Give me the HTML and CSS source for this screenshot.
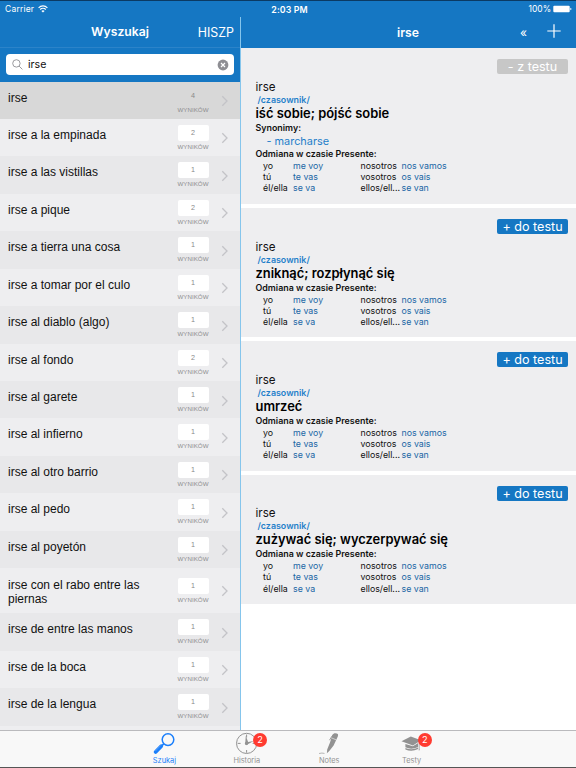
FILE: index.html
```html
<!DOCTYPE html>
<html lang="pl">
<head>
  <meta charset="UTF-8">
  <meta name="viewport" content="width=device-width, initial-scale=1.0">
  <title>Wyszukaj</title>
  <link rel="stylesheet" href="styles.css">
</head>
<body>
  <div class="status">
    <span class="carrier">Carrier
      <svg width="10" height="8" viewBox="0 0 10 8" fill="none" stroke="#fff" stroke-width="1.2">
        <path d="M.6 2.8a6.2 6.2 0 0 1 8.8 0M2.2 4.5a4 4 0 0 1 5.6 0"/>
        <path d="M5 7.6 3.4 5.9a2.3 2.3 0 0 1 3.2 0z" fill="#fff" stroke="none"/>
      </svg>
    </span>
    <span class="time">2:03 PM</span>
    <span class="battery">100%
      <svg width="19" height="8" viewBox="0 0 19 8" fill="#fff">
        <rect x=".3" y=".7" width="16.4" height="6.6" rx="1"/>
        <path d="M17.3 2.7q1.2.3 1.2 1.3t-1.2 1.3z"/>
      </svg>
    </span>
  </div>

  <main>
    <section class="sidebar">
      <header>
        <h1>Wyszukaj</h1>
        <span class="lang">HISZP</span>
      </header>
      <div class="search">
        <div class="search-field">
          <svg width="11" height="11" viewBox="0 0 11 11" fill="none" stroke="#8e8e93" stroke-width=".9">
            <circle cx="4.4" cy="4.4" r="3.7"/>
            <path d="m7.1 7.1 3.3 3.3"/>
          </svg>
          <span>irse</span>
          <svg class="clear" width="12" height="12" viewBox="0 0 12 12">
            <circle cx="6" cy="6" r="5.4" fill="#8e8e93"/>
            <path d="m4 4 4 4m0-4L4 8" stroke="#fff" stroke-width="1.2"/>
          </svg>
        </div>
      </div>
      <ul class="results" id="results"></ul>
    </section>

    <section class="detail">
      <header>
        <h1>irse</h1>
        <span class="back">«</span>
        <svg class="plus" width="14" height="14" viewBox="0 0 14 14" stroke="#fff" stroke-width="1.2">
          <path d="M7 .3v13.4M.3 7h13.4"/>
        </svg>
      </header>
      <div id="cards"></div>
    </section>
  </main>

  <nav class="tabs">
    <div class="tab active">
      <svg width="24" height="24" viewBox="0 0 24 24">
        <circle cx="16" cy="7.6" r="5.8" fill="none" stroke="#1a7ffb" stroke-width="1.5"/>
        <path d="m11.7 11.9-2 1.9" stroke="#1a7ffb" stroke-width="1.6"/>
        <path d="m9.2 14.2-5.600 5.800" stroke="#1a7ffb" stroke-width="3.800" stroke-linecap="round"/>
        <path d="m8.800 13.400-5.400 5.600" stroke="#7db5fa" stroke-width=".6"/>
      </svg>
      <span>Szukaj</span>
    </div>
    <div class="tab">
      <svg width="24" height="24" viewBox="0 0 24 24">
        <circle cx="11.6" cy="11.4" r="10.1" fill="none" stroke="#929292" stroke-width="1"/>
        <path d="M11.600 2.500v3M11.600 18v2.800M2.600 11.400h3M17.600 11.400h3" stroke="#929292"/>
        <path d="m10.800 3.800 2.300 6.200 5.700-1-5.600 3.100-2 1.100-1-1.500z" fill="#929292"/>
        <circle cx="11.500" cy="11.400" r="1.600" fill="#929292"/>
      </svg>
      <b>2</b>
      <span>Historia</span>
    </div>
    <div class="tab">
      <svg width="24" height="24" viewBox="0 0 24 24">
        <path d="M15.400 2.700Q18 .4 20.800 1.900q.6.900 0 2.500l-4.200 9-4.100 5.300-2.600 2.500.3-3.600 2.800-7z" fill="#929292"/>
        <path d="M17.400 1.800q-2.400 1.400-4.900 6.400" stroke="#929292" stroke-width=".9" fill="none"/>
        <path d="m14.800 6 4.200 1.800" stroke="#f8f8f8" stroke-width=".6"/>
        <path d="M2 21.500q3-.8 5.500-.1" stroke="#999" stroke-width=".7" fill="none"/>
      </svg>
      <span>Notes</span>
    </div>
    <div class="tab">
      <svg width="24" height="24" viewBox="0 0 24 24" fill="#929292">
        <path d="M1.500 9.300 10.800 4.400 20.300 8v.8l-7.400 4.700z"/>
        <path d="M5.400 12v3.200q6 3 12.800-.3v-3.800l-5.300 3.200z"/>
        <path d="M5.400 15.900v1.500q6 3 12.800-.3v-1.500q-6.400 3.200-12.800.3z"/>
        <path d="M18.900 9.800v7.200l-.4 1.300h1.300l-.3-1.300V9.500z"/>
      </svg>
      <b>2</b>
      <span>Testy</span>
    </div>
  </nav>

  <script>
    const wyniki = [
      ['irse', 4], ['irse a la empinada', 2], ['irse a las vistillas', 1],
      ['irse a pique', 2], ['irse a tierra una cosa', 1], ['irse a tomar por el culo', 1],
      ['irse al diablo (algo)', 1], ['irse al fondo', 2], ['irse al garete', 1],
      ['irse al infierno', 1], ['irse al otro barrio', 1], ['irse al pedo', 1],
      ['irse al poyetón', 1], ['irse con el rabo entre las piernas', 1],
      ['irse de entre las manos', 1], ['irse de la boca', 1], ['irse de la lengua', 1]
    ];

    const karty = [
      { znaczenie: 'iść sobie; pójść sobie', synonim: 'marcharse', dodane: true },
      { znaczenie: 'zniknąć; rozpłynąć się' },
      { znaczenie: 'umrzeć' },
      { znaczenie: 'zużywać się; wyczerpywać się' }
    ];

    const odmiana = [
      ['yo', 'me voy', 'nosotros', 'nos vamos'],
      ['tú', 'te vas', 'vosotros', 'os vais'],
      ['él/ella', 'se va', 'ellos/ell...', 'se van']
    ];

    document.getElementById('results').innerHTML = wyniki.map(([haslo, ile]) => `
      <li class="${haslo.length > 30 ? 'tall' : ''}">
        <span class="term">${haslo}</span>
        <span class="count"><b>${ile}</b><small>WYNIKÓW</small></span>
        <svg width="8" height="12" viewBox="0 0 8 12" fill="none" stroke="#c3c3c7" stroke-width="1.3">
          <path d="m1.3 1.3 4.700 4.700-4.700 4.700"/>
        </svg>
      </li>`).join('');

    document.getElementById('cards').innerHTML = karty.map(k => `
      <article class="card">
        <button class="${k.dodane ? 'remove' : ''}">${k.dodane ? '- z testu' : '+ do testu'}</button>
        <p class="word">irse</p>
        <p class="kind">/czasownik/</p>
        <h2>${k.znaczenie}</h2>
        ${k.synonim ? `<h3>Synonimy:</h3><p class="synonym">- ${k.synonim}</p>` : ''}
        <h3>Odmiana w czasie Presente:</h3>
        <div class="forms">${odmiana.flat().map(f => `<span>${f}</span>`).join('')}</div>
      </article>`).join('');
  </script>
</body>
</html>
```
FILE: styles.css
```css
* {
  box-sizing: border-box;
}

body {
  font-family: 'Inter', sans-serif;
  margin: 0;
  height: 768px;
  display: flex;
  flex-direction: column;
  overflow: hidden;
  background-color: #fff;
  color: #111;
}

h1, h2, h3, p, ul {
  margin: 0;
  padding: 0;
}

svg {
  display: block;
  flex: none;
}

.status {
  display: grid;
  grid-template-columns: 1fr auto 1fr;
  height: 17px;
  flex: none;
  padding: 0 4px 0 5px;
  align-items: center;
  border-top: 1px solid #0b3a63;
  background-color: #1577c3;
  color: #fff;
  font-size: 8.5px;
  line-height: 15px;
}

.carrier, .battery {
  display: flex;
  align-items: center;
  gap: 4px;
  height: 15px;
  letter-spacing: 0.2px;
}

.battery {
  justify-content: flex-end;
  gap: 2px;
  letter-spacing: 0;
}

.time {
  font-weight: 600;
  font-size: 8.8px;
  letter-spacing: 0.1px;
  padding-left: 2px;
}

main {
  display: flex;
  flex: 1;
  min-height: 0;
}

.sidebar {
  width: 240px;
  background-color: #eeeef0;
  overflow: hidden;
}

.detail {
  flex: 1;
  border-left: 1px solid #85c5ec;
  overflow: hidden;
}

header {
  display: grid;
  grid-template-columns: 1fr auto 1fr;
  align-items: center;
  height: 31px;
  background-color: #1577c3;
  color: #fff;
}

header h1 {
  grid-column: 2;
  font-size: 12.2px;
  font-weight: 600;
  line-height: 30px;
}

.sidebar header {
  border-bottom: 1px solid #2b83c9;
}

.lang {
  justify-self: end;
  padding-right: 6px;
  font-size: 12.4px;
}

.detail header {
  grid-template-columns: 1fr auto 1fr auto;
  padding-right: 15px;
}

.detail header h1 {
  padding-left: 28px;
}

.back {
  justify-self: end;
  padding-right: 20px;
  font-size: 12px;
}

.plus {
  margin-top: -3px;
}

.search {
  height: 34px;
  padding: 6px;
  background-color: #1577c3;
}

.search-field {
  display: flex;
  align-items: center;
  height: 21px;
  padding: 0 5px 0 6px;
  border-radius: 4px;
  background-color: #fff;
  font-size: 10.6px;
}

.search-field span {
  flex: 1;
  padding-left: 5px;
}

.results {
  list-style: none;
  margin-top: -0.5px;
}

.results li {
  display: flex;
  height: 37.45px;
  padding: 6px 11px 0 8px;
  background-color: #eeeef0;
  font-family: 'Liberation Sans', sans-serif;
}

.results li:nth-child(odd) {
  background-color: #e8e8ea;
}

.results li:first-child {
  background-color: #d8d8d8;
}

.results .tall {
  height: 45px;
  padding-top: 10px;
}

.term {
  width: 168px;
  font-size: 12px;
  line-height: 14px;
  padding-top: 3px;
}

.tall .term {
  padding-top: 0;
}

.count {
  width: 34px;
  display: flex;
  flex-direction: column;
  align-items: center;
}

.count b {
  width: 31px;
  height: 16px;
  border-radius: 2px;
  background-color: #fff;
  color: #8a8a8a;
  font-size: 7.2px;
  font-weight: normal;
  line-height: 16px;
  text-align: center;
}

li:first-child .count b {
  background: none;
}

.count small {
  margin-top: 2px;
  color: #8d8d8f;
  font-size: 6.2px;
  line-height: 7px;
}

.results li svg {
  margin: 7.5px 0 0 11px;
}

.results .tall svg {
  margin-top: 6.5px;
}

.card {
  display: flex;
  flex-direction: column;
  height: 129.4px;
  margin-bottom: 4px;
  padding: 11px 8px 0 14.5px;
  background-color: #eeeef0;
}

.card:first-child {
  height: 156px;
}

.card button {
  align-self: flex-end;
  width: 71px;
  height: 15px;
  padding: 0;
  border: none;
  border-radius: 2px;
  background-color: #1577c3;
  color: #fff;
  font: 12.6px/15px 'Inter', sans-serif;
}

.card .remove {
  background-color: #c7c7c7;
}

.word {
  margin-top: 5.5px;
  font-size: 11.6px;
  line-height: 14px;
}

.kind {
  padding-left: 2px;
  color: #1f7fca;
  font-size: 8.9px;
  font-weight: 600;
  line-height: 12px;
}

.card h2 {
  color: #000;
  font-size: 12.9px;
  font-weight: 600;
  line-height: 16px;
}

.card h3 {
  font-size: 8.9px;
  font-weight: 600;
  line-height: 12px;
}

.synonym {
  padding-left: 11px;
  color: #1f7fca;
  font-size: 10.9px;
  line-height: 14.5px;
}

.forms {
  display: grid;
  grid-template-columns: 30px 67.5px 41px auto;
  justify-content: start;
  padding-left: 7.5px;
  font-size: 8.8px;
  line-height: 11.2px;
  white-space: nowrap;
}

.forms span:nth-child(even) {
  color: #1a66a5;
}

.tabs {
  display: flex;
  justify-content: center;
  height: 38px;
  flex: none;
  border-top: 1px solid #bababd;
  border-bottom: 1px solid #555;
  background-color: #f8f8f8;
}

.tab {
  position: relative;
  display: flex;
  flex-direction: column;
  align-items: center;
  width: 82.4px;
  padding-top: 1px;
  color: #929292;
  font-size: 7.4px;
  line-height: 9px;
}

.tab.active {
  color: #1a7ffb;
}

.tab b {
  position: absolute;
  top: 2px;
  left: 47.5px;
  width: 14px;
  height: 14px;
  border-radius: 50%;
  background-color: #ff3b30;
  color: #fff;
  font-size: 9.2px;
  font-weight: normal;
  line-height: 14px;
  text-align: center;
}
```
